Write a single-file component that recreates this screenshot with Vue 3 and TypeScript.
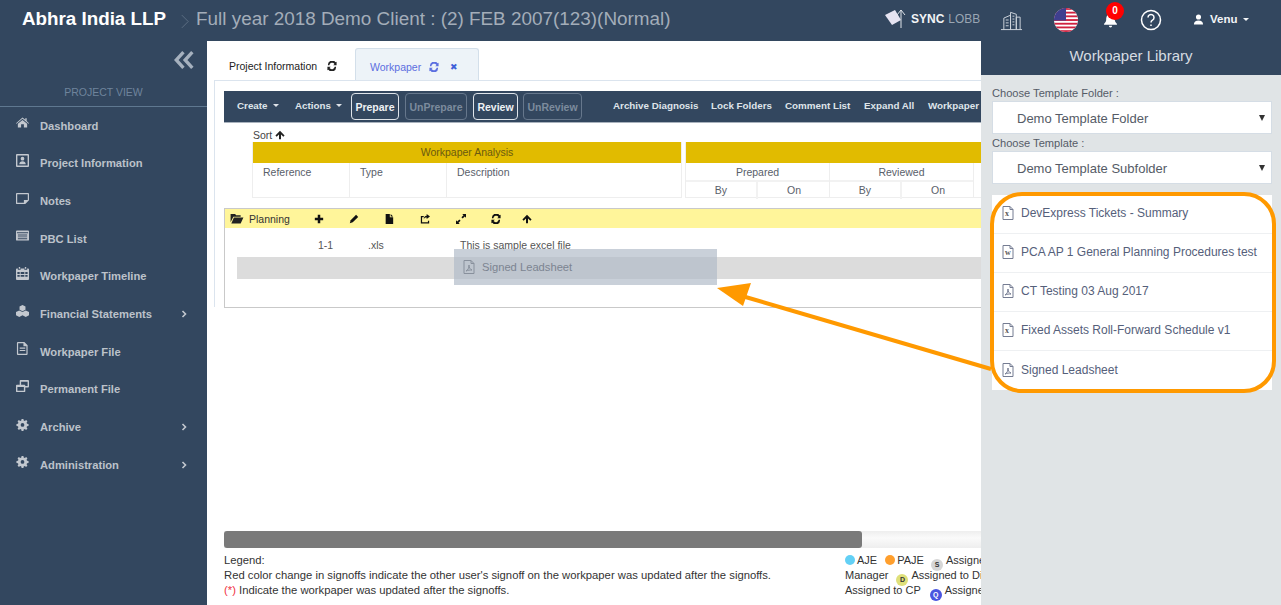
<template>
  <div class="page">
    <header class="topbar">
      <span class="brand">Abhra India LLP</span>
      <svg class="crumb" viewBox="0 0 10 18"><path d="M1 1l8 8-8 8" /></svg>
      <span class="project">Full year 2018 Demo Client : (2) FEB 2007(123)(Normal)</span>
    </header>

    <div class="body">
      <aside class="sidebar">
        <div class="collapse">
          <svg viewBox="0 0 18 16"><path d="M8.5 1L2 8l6.5 7M16.5 1L10 8l6.5 7" /></svg>
        </div>
        <div class="view-title">PROJECT VIEW</div>
        <nav class="menu">
          <div v-for="item in menuItems" :key="item.label" class="menu-item">
            <svg class="menu-icon" viewBox="0 0 14 14"><path :d="item.icon" /></svg>
            <span class="menu-label">{{ item.label }}</span>
            <svg v-if="item.more" class="menu-more" viewBox="0 0 6 8"><path d="M1.5 1l3 3-3 3" /></svg>
          </div>
        </nav>
      </aside>

      <main class="main">
        <div class="tabs">
          <div class="tab">
            Project Information
            <svg class="sync" viewBox="0 0 12 12"><path :d="syncIcon" /></svg>
          </div>
          <div class="tab tab-active">
            Workpaper
            <svg class="sync" viewBox="0 0 12 12"><path :d="syncIcon" /></svg>
            <span class="tab-close">✖</span>
          </div>
        </div>

        <section class="frame">
          <div class="toolbar">
            <span class="tool tool-create">Create <i class="caret"></i></span>
            <span class="tool tool-actions">Actions <i class="caret"></i></span>
            <button class="btn btn-prepare">Prepare</button>
            <button class="btn btn-off btn-unprepare">UnPrepare</button>
            <button class="btn btn-review">Review</button>
            <button class="btn btn-off btn-unreview">UnReview</button>
            <span class="tool tool-archive">Archive Diagnosis</span>
            <span class="tool tool-lock">Lock Folders</span>
            <span class="tool tool-comment">Comment List</span>
            <span class="tool tool-expand">Expand All</span>
            <span class="tool">Workpaper</span>
          </div>

          <div class="sort">
            Sort
            <svg class="sort-arrow" viewBox="0 0 12 12"><path :d="upIcon" /></svg>
          </div>

          <div class="grid-head">
            <div class="block block-left">
              <div class="gold">Workpaper Analysis</div>
              <div class="cols3">
                <div>Reference</div>
                <div>Type</div>
                <div>Description</div>
              </div>
            </div>
            <div class="block block-right">
              <div class="gold"></div>
              <div class="cols-sign">
                <div class="sign">
                  <div class="sign-name">Prepared</div>
                  <div class="sign-sub"><span>By</span><span>On</span></div>
                </div>
                <div class="sign">
                  <div class="sign-name">Reviewed</div>
                  <div class="sign-sub"><span>By</span><span>On</span></div>
                </div>
              </div>
            </div>
          </div>

          <div class="folder">
            <div class="folder-bar">
              <svg class="folder-icon" viewBox="0 0 14 12"><path d="M0 1h5l1 1.5h5V4H3L0 10zM3.6 5H14l-3 6.500H.8z" /></svg>
              <span class="folder-name">Planning</span>
              <svg v-for="tool in folderTools" :key="tool.id" class="folder-tool" :class="tool.id" viewBox="0 0 12 12"><path :d="tool.icon" /></svg>
            </div>
            <div class="file-row">
              <span class="file-ref">1-1</span>
              <span class="file-type">.xls</span>
              <span>This is sample excel file</span>
            </div>
            <div class="drop-row"></div>
          </div>
        </section>

        <div class="scrollbar"><div class="scroll-thumb"></div></div>

        <footer class="legend">
          <div class="legend-left">
            <div>Legend:</div>
            <div>Red color change in signoffs indicate the other user's signoff on the workpaper was updated after the signoffs.</div>
            <div><span class="red">(*)</span> Indicate the workpaper was updated after the signoffs.</div>
          </div>
          <div class="legend-right">
            <div>
              <i class="dot dot-aje"></i>AJE
              <i class="dot dot-paje"></i>PAJE
              <i class="dot dot-s">S</i>Assigned to Senior
            </div>
            <div>Manager <i class="dot dot-d">D</i>Assigned to Director</div>
            <div>Assigned to CP <i class="dot dot-q">Q</i>Assigned to QC</div>
          </div>
        </footer>
      </main>
    </div>

    <!-- top bar icons and library panel lie over the page -->
    <div class="top-tools">
      <div class="logo">
        <svg class="logo-mark" viewBox="0 0 24 20">
          <path class="logo-book" d="M1 6l10-5 6 10-9 5z" />
          <path class="logo-arrow" d="M17 1v18M13 6l4-5 4 5" />
        </svg>
        <span class="logo-sync">SYNC</span><span class="logo-lobby">LOBB</span>
      </div>
    </div>

    <aside class="library">
      <div class="icons-row">
        <svg class="ic-building" viewBox="0 0 24 22"><path d="M1 21h22M4 21V9l7-3v15M11 21V3l6 2v16M17 21V8h4v13M6 11h3M6 14h3M6 17h3M13 7h2M13 10h2M13 13h2M13 16h2" /></svg>
        <svg class="ic-flag" viewBox="0 0 24 24">
          <defs><clipPath id="flagClip"><circle cx="12" cy="12" r="12" /></clipPath></defs>
          <g clip-path="url(#flagClip)">
            <rect width="24" height="24" fill="#fff" />
            <rect v-for="n in 7" :key="n" x="0" :y="(n - 1) * 3.7" width="24" height="1.85" fill="#d0213f" />
            <rect width="12" height="12.500" fill="#3f3f8f" />
          </g>
        </svg>
        <div class="bell">
          <svg viewBox="0 0 14 14"><path d="M7 1c3 0 4 2.500 4 5 0 2 1 3 2 4v1H1v-1c1-1 2-2 2-4 0-2.500 1-5 4-5zM5.500 12h3a1.500 1.500 0 0 1-3 0z" /></svg>
          <span class="badge">0</span>
        </div>
        <svg class="ic-help" viewBox="0 0 22 22">
          <circle cx="11" cy="11" r="9.500" />
          <path d="M8 8.500a3 3 0 1 1 4.500 2.600c-1 .6-1.500 1.200-1.500 2.400M11 15.500v1.500" />
        </svg>
        <div class="user">
          <svg viewBox="0 0 12 12"><path d="M6 .5a2.700 2.700 0 0 1 0 5.600A2.700 2.700 0 0 1 6 .5zM1 11.500c0-3 2-4.500 5-4.500s5 1.500 5 4.500z" /></svg>
          <span>Venu</span>
          <i class="caret"></i>
        </div>
      </div>
      <h2 class="lib-title">Workpaper Library</h2>
      <div class="lib-body">
        <label class="lib-label">Choose Template Folder :</label>
        <div class="lib-select">Demo Template Folder<i class="lib-caret"></i></div>
        <label class="lib-label">Choose Template :</label>
        <div class="lib-select">Demo Template Subfolder<i class="lib-caret"></i></div>
        <ul class="lib-list">
          <li v-for="doc in documents" :key="doc.name">
            <svg class="doc-icon" viewBox="0 0 12 14">
              <path d="M1 .5h7l3 3v10H1zM8 .5v3h3" />
              <path v-if="doc.kind === 'pdf'" d="M3 11c2-1 3-3 3-6 0 3 1 4 3 5-2 0-4 0-6 1z" />
            </svg>
            <span v-if="doc.kind !== 'pdf'" class="doc-letter">{{ doc.kind }}</span>
            <span>{{ doc.name }}</span>
          </li>
        </ul>
      </div>
    </aside>

    <div class="ghost">
      <svg class="doc-icon ghost-icon" viewBox="0 0 12 14">
        <path d="M1 .5h7l3 3v10H1zM8 .5v3h3" />
        <path d="M3 11c2-1 3-3 3-6 0 3 1 4 3 5-2 0-4 0-6 1z" />
      </svg>
      Signed Leadsheet
    </div>

    <svg class="callout" viewBox="0 0 1281 605">
      <rect x="992" y="194" width="282" height="197" rx="30" />
      <path d="M991 369L742 296" />
      <path class="head" d="M717 288L751 283L743 306z" />
    </svg>
  </div>
</template>

<script setup lang="ts">
interface MenuItem {
  label: string
  icon: string
  more?: boolean
}

const gear =
  'M6 1h2l.3 1.600 1.200.5L10.900 2.200l1.400 1.400-.9 1.400.5 1.200L13.500 6.500v2l-1.600.3-.5 1.200.9 1.400-1.400 1.400-1.400-.9-1.200.5L8 14H6l-.3-1.600-1.200-.5-1.400.9-1.400-1.400.9-1.400-.5-1.200L.5 8.500v-2l1.600-.3.5-1.200-.9-1.400 1.400-1.400 1.400.9 1.200-.5zM7 5.500a2 2 0 1 0 0 4 2 2 0 0 0 0-4z'

const menuItems: MenuItem[] = [
  { label: 'Dashboard', icon: 'M7 1.500l3 2.600V2.500h1.500v3L14 7.700l-.6.700L7 3 .6 8.400 0 7.700zM7 4.200l5 4.200V12.500H8.500V9h-3v3.500H2V8.400z' },
  { label: 'Project Information', icon: 'M1 0h12a1 1 0 0 1 1 1v12a1 1 0 0 1-1 1H1a1 1 0 0 1-1-1V1a1 1 0 0 1 1-1zm.500 1.500v11h11v-11zM7 3a2 2 0 1 1 0 4 2 2 0 0 1 0-4zM3.500 11c0-2 1.500-3.200 3.500-3.200S10.500 9 10.500 11z' },
  { label: 'Notes', icon: 'M1 1h12a1 1 0 0 1 1 1v7l-4 4H1a1 1 0 0 1-1-1V2a1 1 0 0 1 1-1zm.300 1.300v9.400h7.200V8.500h4.200V2.300z' },
  { label: 'PBC List', icon: 'M1 1.500h12a1 1 0 0 1 1 1v9a1 1 0 0 1-1 1H1a1 1 0 0 1-1-1v-9a1 1 0 0 1 1-1zM1 3.500v1h12v-1zM2 6v1h10V6zM2 8v1h10V8zM2 10v1h10v-1z' },
  { label: 'Workpaper Timeline', icon: 'M3 0h1.500v2H3zM9.500 0H11v2H9.500zM1 1.500h1V3h3V1.500h4V3h3V1.500h1a1 1 0 0 1 1 1V13a1 1 0 0 1-1 1H1a1 1 0 0 1-1-1V2.500a1 1 0 0 1 1-1zM1.500 5.500v2h2.500v-2zM5 5.500v2h4v-2zM10 5.500v2h2.500v-2zM1.500 8.500v2h2.500v-2zM5 8.500v2h4v-2zM10 8.500v2h2.500v-2z' },
  { label: 'Financial Statements', icon: 'M7 0l3.200 1.600v3.600L7 6.800 3.800 5.200V1.600zM3.500 5.800L7 7.500v3.500l-3.500 1.800L0 11V7.500zM10.500 5.800L14 7.500V11l-3.500 1.800L7 11V7.500z', more: true },
  { label: 'Workpaper File', icon: 'M2 0h7l3.500 3.500V13a1 1 0 0 1-1 1H2a1 1 0 0 1-1-1V1a1 1 0 0 1 1-1zm.300 1.300v11.400h8.900V4.500H8V1.300zM4 6h6v1.200H4zM4 8.500h6v1.200H4z' },
  { label: 'Permanent File', icon: 'M5 0h8a1 1 0 0 1 1 1v6a1 1 0 0 1-1 1h-3v4a1 1 0 0 1-1 1H1a1 1 0 0 1-1-1V6a1 1 0 0 1 1-1h3V1a1 1 0 0 1 1-1zm.500 2v3H9a1 1 0 0 1 1 1v.500h2.500V2zM1.500 7.500v4h7v-4z' },
  { label: 'Archive', icon: gear, more: true },
  { label: 'Administration', icon: gear, more: true },
]

const syncIcon =
  'M10.200 1.500L11.500 1v4H7.500l1.500-1.500A3.500 3.500 0 0 0 2.800 5H1.200a5 5 0 0 1 9-3.500zM1.800 10.500L.5 11V7h4L3 8.500A3.500 3.500 0 0 0 9.200 7h1.600a5 5 0 0 1-9 3.500z'

const upIcon = 'M6 1l5.500 5.500-1.500 1.500L7.200 5.300V11H4.800V5.300L2 8 .5 6.500z'

const folderTools = [
  { id: 't-add', icon: 'M4.500 1h3v3.500H11v3H7.500V11h-3V7.500H1v-3h3.500z' },
  { id: 't-edit', icon: 'M8.500 1L11 3.500 4.500 10 1 11l1-3.500z' },
  { id: 't-file', icon: 'M2 0h5v4h4v8H2zM8 0l3 3H8z' },
  { id: 't-share', icon: 'M8 0l4 3-4 3V4.200C6 4.200 5 5 4.500 6.500 4.500 4 6 2 8 2zM1 2.500h3.500V4H2.500v6h7V8H11v3.500H1z' },
  { id: 't-expand', icon: 'M7.500 0H12v4.500L10.500 3 8 5.500 6.500 4 9 1.500zM4.500 12H0V7.500L1.500 9 4 6.500 5.500 8 3 10.500z' },
  { id: 't-sync', icon: syncIcon },
  { id: 't-up', icon: upIcon },
]

const documents = [
  { name: 'DevExpress Tickets - Summary', kind: 'x' },
  { name: 'PCA AP 1 General Planning Procedures test', kind: 'w' },
  { name: 'CT Testing 03 Aug 2017', kind: 'pdf' },
  { name: 'Fixed Assets Roll-Forward Schedule v1', kind: 'x' },
  { name: 'Signed Leadsheet', kind: 'pdf' },
]
</script>

<style>
html,
body {
  margin: 0;
  overflow: hidden;
}
</style>

<style scoped>
.page {
  position: relative;
  width: 1281px;
  height: 605px;
  overflow: hidden;
  background: #33475f;
  font-family: "Liberation Sans", Arial, sans-serif;
  color: #555;
}

.topbar {
  display: flex;
  align-items: center;
  height: 41px;
  padding: 0 0 3px 22px;
  box-sizing: border-box;
  background: #33475f;
}

.brand {
  font-size: 18.8px;
  font-weight: 700;
  color: #fff;
}

.crumb {
  width: 8px;
  height: 15px;
  margin: 4px 7px 0 15px;
  fill: none;
  stroke: #66778c;
}

.project {
  font-size: 18.9px;
  color: #a3adb9;
}

.body {
  display: flex;
  height: 564px;
}

.sidebar {
  flex: 0 0 207px;
  background: #33475f;
}

.collapse {
  display: flex;
  justify-content: flex-end;
  padding: 10px 13px 0 0;
}

.collapse svg {
  width: 20px;
  height: 18px;
  fill: none;
  stroke: #a6b1be;
  stroke-width: 3;
}

.view-title {
  margin-top: 17px;
  padding-bottom: 7px;
  border-bottom: 1px solid #5f7890;
  text-align: center;
  font-size: 10.5px;
  line-height: 13px;
  color: #6f849c;
}

.menu-item {
  position: relative;
  display: flex;
  align-items: center;
  height: 37.67px;
  padding-left: 16px;
  font-size: 11.2px;
  font-weight: 700;
  color: #bcc2ca;
}

.menu-icon {
  width: 13px;
  height: 13px;
  margin: -6px 11px 0 0;
  fill: #c3c8cf;
  fill-rule: evenodd;
}

.menu-more {
  position: absolute;
  right: 20px;
  width: 6px;
  height: 8px;
  fill: none;
  stroke: #c3c8cf;
  stroke-width: 1.6;
}

.main {
  flex: 1;
  padding: 7px 0 0 7px;
  background: #fff;
  min-width: 0;
}

.tabs {
  display: flex;
  height: 32px;
  font-size: 10.5px;
}

.tab {
  display: flex;
  align-items: center;
  gap: 10px;
  width: 141px;
  padding: 4px 0 0 15px;
  box-sizing: border-box;
  color: #222;
}

.sync {
  width: 10px;
  height: 10px;
  fill: currentColor;
  fill-rule: evenodd;
}

.tab-active {
  width: 124px;
  gap: 8px;
  padding-left: 14px;
  background: #edf3f8;
  border: 1px solid #d3dfea;
  border-bottom: none;
  border-radius: 3px 3px 0 0;
  color: #5c6fe0;
}

.tab-close {
  margin-left: 3px;
  font-size: 9px;
  color: #3f5fd8;
}

.frame {
  box-sizing: border-box;
  height: 227px;
  padding: 10px 0 0 9px;
  border: 1px solid #dbe4ee;
  border-right: none;
  border-bottom: none;
}

.toolbar {
  display: flex;
  align-items: center;
  height: 32px;
  padding-left: 13px;
  background: #33475f;
  border-bottom: 1px solid #a9b2bd;
  box-sizing: border-box;
  font-size: 9.8px;
  font-weight: 700;
  color: #dfe4ea;
  white-space: nowrap;
}

.tool {
  display: inline-flex;
  align-items: center;
  gap: 2px;
  margin-top: -2px;
}

.tool-create { width: 58px; }
.tool-actions { width: 56px; }
.tool-archive { width: 98px; margin-left: 31px; }
.tool-lock { width: 74px; }
.tool-comment { width: 79px; }
.tool-expand { width: 64px; }

.caret {
  display: inline-block;
  width: 0;
  height: 0;
  margin-left: 3px;
  border-left: 3.500px solid transparent;
  border-right: 3.500px solid transparent;
  border-top: 3.500px solid currentColor;
}

.btn {
  box-sizing: border-box;
  height: 27px;
  padding: 0;
  border: 1px solid #dfe4ea;
  border-radius: 4px;
  background: transparent;
  font: 700 10.5px "Liberation Sans", Arial, sans-serif;
  color: #eef1f4;
}

.btn-prepare { width: 48px; }
.btn-unprepare { width: 62px; margin-left: 6px; }
.btn-review { width: 45px; margin-left: 6px; }
.btn-unreview { width: 59px; margin-left: 5px; }

.btn-off {
  border-color: #66778c;
  color: #7c8b9d;
}

.sort {
  display: flex;
  align-items: center;
  gap: 3px;
  height: 19px;
  padding: 4px 0 0 29px;
  box-sizing: border-box;
  font-size: 10.5px;
  line-height: 12px;
  color: #444;
}

.sort-arrow {
  width: 10px;
  height: 10px;
  fill: #222;
}

.grid-head {
  display: flex;
  gap: 3px;
  height: 56px;
  margin-left: 28px;
  font-size: 10.5px;
  color: #59606a;
}

.block {
  border-bottom: 1px solid #eee;
  border-left: 1px solid #eee;
  box-sizing: border-box;
}

.block-left {
  flex: 0 0 430px;
  border-right: 1px solid #eee;
}

.block-right {
  flex: 1;
}

.gold {
  height: 21px;
  background: #e1bb00;
  color: #6a5a10;
  line-height: 21px;
  text-align: center;
}

.cols3 {
  display: grid;
  grid-template-columns: 97px 97px 1fr;
  height: 34px;
}

.cols3 > div {
  padding: 3px 0 0 10px;
  border-right: 1px solid #eee;
}

.cols3 > div:last-child {
  border-right: none;
}

.cols-sign {
  display: grid;
  grid-template-columns: 144px 144px;
}

.sign {
  border-right: 1px solid #eee;
  text-align: center;
}

.sign-name {
  height: 19px;
  line-height: 19px;
  border-bottom: 2px solid #f2f2f2;
  box-sizing: border-box;
}

.sign-sub {
  display: grid;
  grid-template-columns: 72px 72px;
  height: 15px;
  line-height: 17px;
}

.sign-sub span:first-child {
  border-right: 2px solid #f2f2f2;
}

.folder {
  height: 100px;
  margin-top: 10px;
  box-sizing: border-box;
  border: 1px solid #c9c9c9;
  border-right: none;
  font-size: 10.5px;
}

.folder-bar {
  position: relative;
  display: flex;
  align-items: center;
  height: 19px;
  padding-left: 5px;
  background: #fff59a;
  color: #333;
}

.folder-icon {
  width: 14px;
  height: 11px;
  fill: #222;
}

.folder-name {
  width: 45px;
  margin-left: 5px;
}

.folder-tool {
  width: 10px;
  height: 10px;
  fill: #111;
  fill-rule: evenodd;
}

.t-add { margin-left: 20px; }
.t-edit { margin-left: 25px; }
.t-file { margin-left: 25px; }
.t-share { margin-left: 26px; }
.t-expand { margin-left: 26px; }
.t-sync { margin-left: 25px; }
.t-up { margin-left: 21px; }

.file-row {
  display: flex;
  height: 29px;
  padding-left: 93px;
  box-sizing: border-box;
  line-height: 34px;
  color: #555;
}

.file-ref { width: 50px; }
.file-type { width: 92px; }

.drop-row {
  height: 22px;
  margin-left: 12px;
  background: #dcdcdc;
}

.scrollbar {
  height: 17px;
  margin: 224px 0 0 10px;
  background: linear-gradient(#eee, #fafafa 40%, #eee);
}

.scroll-thumb {
  width: 638px;
  height: 100%;
  border-radius: 3px;
  background: #7a7a7a;
}

.legend {
  display: flex;
  height: 40px;
  padding: 5px 0 0 10px;
  box-sizing: border-box;
  font-size: 11.28px;
  line-height: 15px;
  color: #333;
  white-space: nowrap;
}

.legend-left {
  flex: 0 0 621px;
}

.legend-right {
  font-size: 11px;
}

.legend-right > div {
  height: 15px;
}

.red {
  color: #f03040;
}

.dot {
  display: inline-block;
  width: 10px;
  height: 10px;
  margin: 0 2px 0 5px;
  border-radius: 50%;
  font: 700 7px/12px "Liberation Sans", Arial, sans-serif;
  font-style: normal;
  text-align: center;
  vertical-align: -1px;
}

.dot-aje { margin-left: 0; background: #63d0f5; }
.dot-paje { background: #ff9f2d; }

.dot-s,
.dot-d,
.dot-q {
  width: 12px;
  height: 12px;
  margin-right: 3px;
  vertical-align: -3px;
}

.dot-s { margin-left: 4px; background: #d6d6d6; color: #333; }
.dot-d { margin-left: 5px; background: #dfe07a; color: #333; }
.dot-q { margin-left: 6px; background: #4a55e0; color: #fff; }

.top-tools {
  position: absolute;
  top: 0;
  left: 884px;
  width: 97px;
  height: 41px;
}

.logo {
  display: flex;
  align-items: center;
  height: 38px;
  white-space: nowrap;
  font-size: 12px;
}

.logo-mark {
  flex: none;
  width: 24px;
  height: 20px;
  margin-right: 3px;
}

.logo-book { fill: #e6e4f2; }

.logo-arrow {
  fill: none;
  stroke: #dfe4ea;
  stroke-width: 1;
}

.logo-sync {
  font-weight: 700;
  color: #f2f4f6;
  margin-right: 4px;
}

.logo-lobby {
  font-size: 11.9px;
  color: #9aa6b3;
}

.library {
  position: absolute;
  top: 0;
  left: 981px;
  width: 300px;
  height: 605px;
  display: flex;
  flex-direction: column;
}

.icons-row {
  position: relative;
  height: 41px;
  flex: none;
}

.icons-row svg {
  position: absolute;
}

.ic-building {
  left: 19px;
  top: 9px;
  width: 23px;
  height: 22px;
  fill: none;
  stroke: #cfd5dc;
  stroke-width: 1;
}

.ic-flag {
  left: 73px;
  top: 8px;
  width: 24px;
  height: 24px;
}

.bell {
  position: absolute;
  left: 122px;
  top: 13px;
  width: 15px;
  height: 15px;
}

.bell svg {
  position: static;
  display: block;
  width: 15px;
  height: 15px;
  fill: #fff;
}

.badge {
  position: absolute;
  top: -11px;
  left: 3px;
  width: 18px;
  height: 18px;
  border-radius: 50%;
  background: #f00;
  color: #fff;
  font-size: 10px;
  font-weight: 700;
  line-height: 17px;
  text-align: center;
}

.ic-help {
  left: 159px;
  top: 9px;
  width: 22px;
  height: 22px;
  fill: none;
  stroke: #fff;
  stroke-width: 1.500;
}

.user {
  position: absolute;
  left: 212px;
  top: 13px;
  display: flex;
  align-items: center;
  gap: 6px;
  font-size: 11.5px;
  font-weight: 700;
  color: #f2f4f6;
}

.user svg {
  position: static;
  width: 11px;
  height: 11px;
  fill: #fff;
}

.user .caret {
  margin-left: 0;
}

.lib-title {
  flex: none;
  height: 34px;
  margin: 0;
  background: #33475f;
  color: #d6dce2;
  font-size: 15px;
  font-weight: 400;
  line-height: 30px;
  text-align: center;
}

.lib-body {
  flex: 1;
  padding: 11px 9px 0 11px;
  background: #e0e4e6;
}

.lib-label {
  display: block;
  height: 15px;
  font-size: 11.1px;
  line-height: 15px;
  color: #555b66;
}

.lib-select {
  position: relative;
  box-sizing: border-box;
  height: 33px;
  margin-bottom: 2px;
  padding-left: 24px;
  border: 1px solid #d5dde5;
  background: #fff;
  font-size: 13px;
  line-height: 33px;
  color: #555b66;
}

.lib-caret {
  position: absolute;
  right: 6px;
  top: 13px;
  border-left: 3.500px solid transparent;
  border-right: 3.500px solid transparent;
  border-top: 6px solid #333;
}

.lib-list {
  margin: 11px 0 0;
  padding: 0;
  list-style: none;
  background: #fff;
}

.lib-list li {
  position: relative;
  display: flex;
  align-items: center;
  gap: 7px;
  height: 39px;
  padding: 0 0 2px 10px;
  box-sizing: border-box;
  border-bottom: 1px solid #eef0f2;
  font-size: 12px;
  color: #55607a;
}

.lib-list li:last-child {
  border-bottom: none;
}

.doc-icon {
  flex: none;
  width: 12px;
  height: 14px;
  fill: none;
  stroke: #757c92;
  stroke-width: 1;
}

.doc-letter {
  position: absolute;
  left: 13px;
  top: 14px;
  font: 700 8px "Liberation Serif", serif;
  color: #555;
}

.ghost {
  position: absolute;
  left: 454px;
  top: 249px;
  display: flex;
  align-items: center;
  gap: 7px;
  width: 263px;
  height: 36px;
  padding-left: 9px;
  box-sizing: border-box;
  background: rgba(176, 186, 199, 0.68);
  font-size: 11.200px;
  color: #7c8491;
}

.ghost-icon {
  stroke: #88909c;
}

.callout {
  position: absolute;
  inset: 0;
  width: 1281px;
  height: 605px;
  pointer-events: none;
  fill: none;
  stroke: #ff9900;
  stroke-width: 4;
}

.callout .head {
  fill: #ff9900;
  stroke: none;
}
</style>
